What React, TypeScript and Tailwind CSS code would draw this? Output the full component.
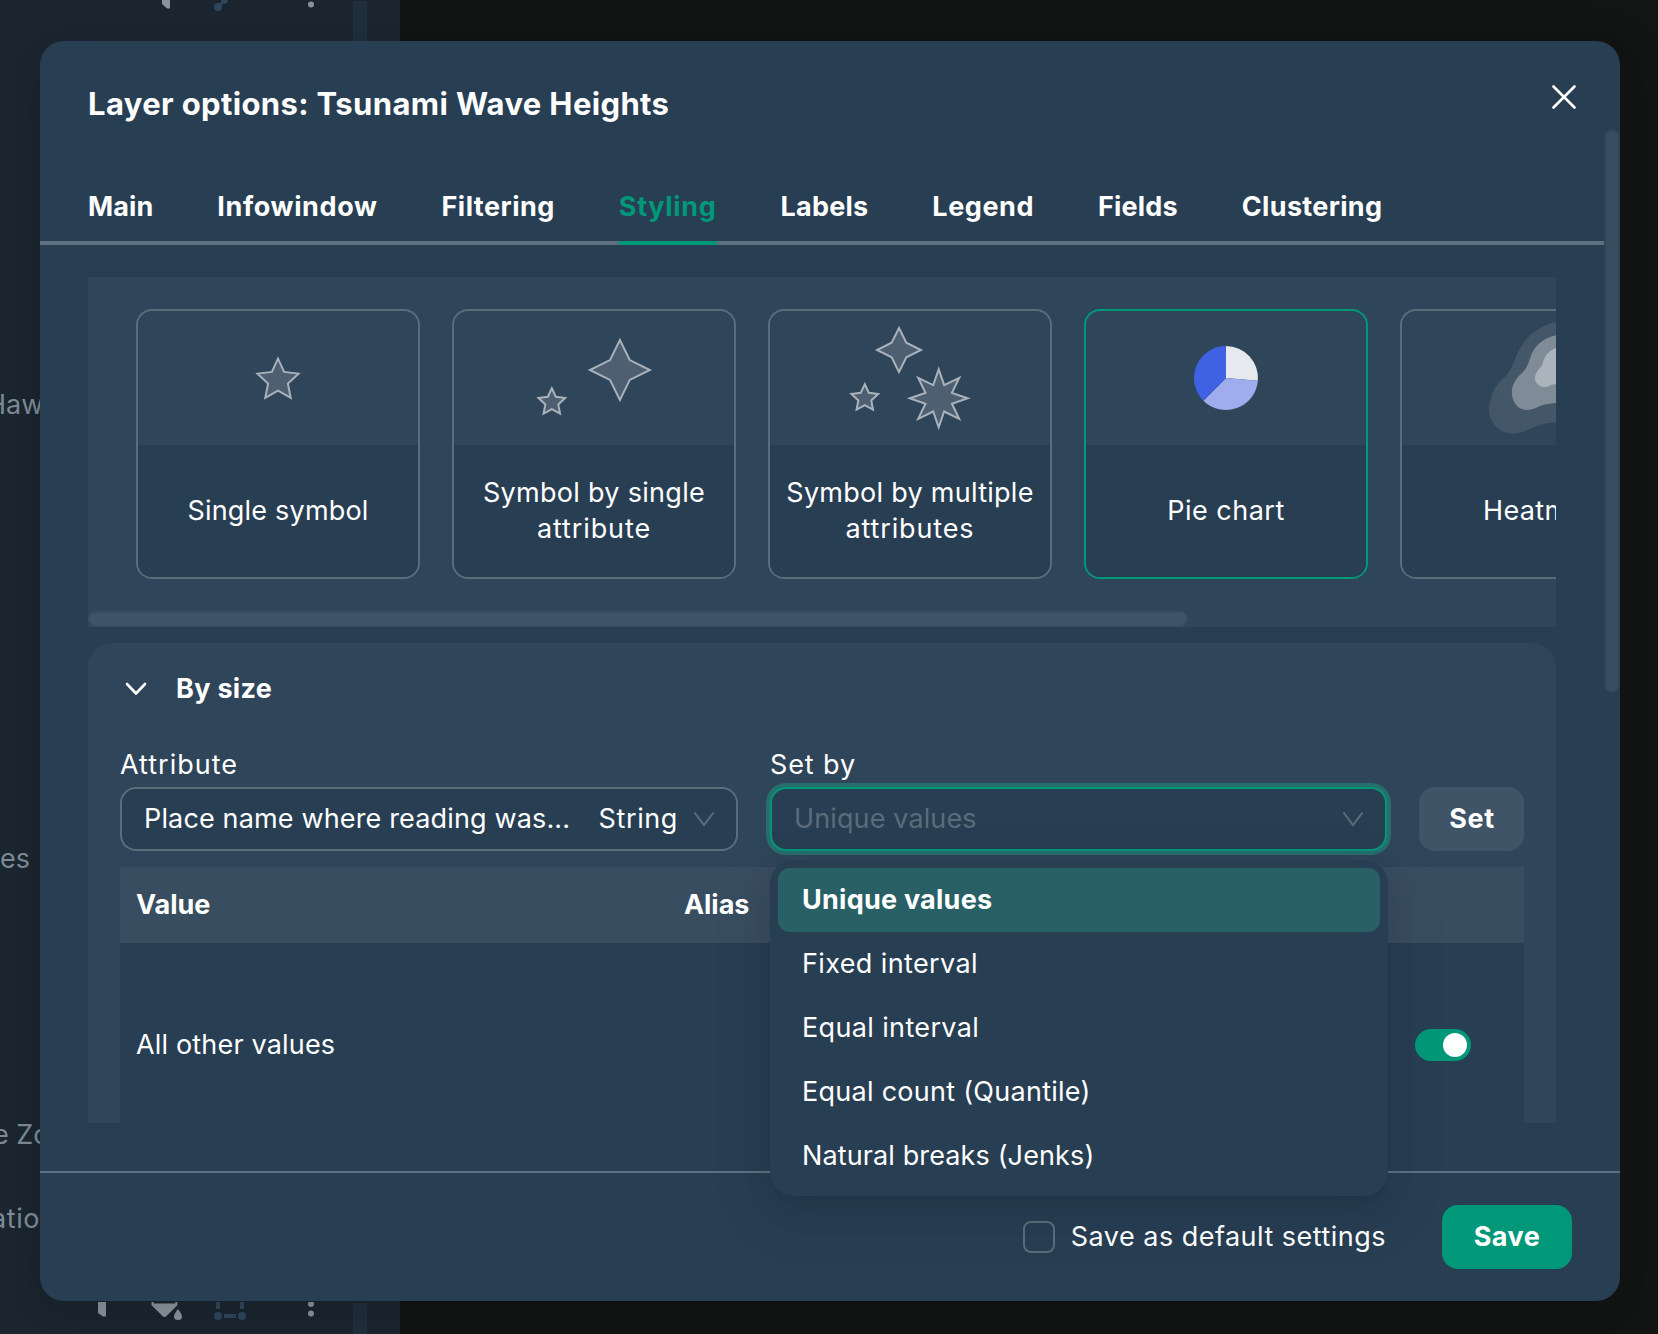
import type { ReactNode } from "react";

const TABS = [
  { label: "Main", cls: "tracking-[0.1px]" },
  { label: "Infowindow", cls: "tracking-[0.62px]" },
  { label: "Filtering", cls: "tracking-[0.48px]" },
  { label: "Styling", cls: "tracking-[0.68px]", active: true },
  { label: "Labels", cls: "tracking-[0.2px]" },
  { label: "Legend", cls: "tracking-[0.58px]" },
  { label: "Fields", cls: "tracking-[0.17px]" },
  { label: "Clustering", cls: "tracking-[0.32px]" },
];

const OPTIONS = [
  { label: "Unique values", cls: "bg-[#296065] font-bold tracking-[0.25px]" },
  { label: "Fixed interval", cls: "tracking-[0.38px]" },
  { label: "Equal interval", cls: "tracking-[0.36px]" },
  { label: "Equal count (Quantile)", cls: "tracking-[0.27px]" },
  { label: "Natural breaks (Jenks)", cls: "tracking-[0.12px]" },
];

function starPoints(n: number, cx: number, cy: number, outer: number, inner: number) {
  return Array.from({ length: n * 2 }, (_, i) => {
    const r = i % 2 ? inner : outer;
    const a = (Math.PI * i) / n - Math.PI / 2;
    return `${(cx + r * Math.cos(a)).toFixed(2)},${(cy + r * Math.sin(a)).toFixed(2)}`;
  }).join(" ");
}

function Star({ n, x, y, outer, inner }: { n: number; x: number; y: number; outer: number; inner: number }) {
  return (
    <polygon
      points={starPoints(n, x, y, outer, inner)}
      fill="#4d5f70"
      stroke="#a9b2bb"
      strokeWidth="2"
      strokeMiterlimit="10"
    />
  );
}

function TypeCard({ children, lines, active }: { children: ReactNode; lines: ReactNode; active?: boolean }) {
  return (
    <div
      className={`flex h-[270px] w-[284px] shrink-0 flex-col overflow-hidden rounded-2xl border-2 ${
        active ? "border-[#009878]" : "border-[#5b6c7b]"
      }`}
    >
      <svg className="block h-[134px] w-[280px] shrink-0" viewBox="0 0 280 134">
        {children}
      </svg>
      <div className="flex flex-1 flex-col items-center justify-center bg-[#283e53] text-center leading-9 whitespace-nowrap">
        {lines}
      </div>
    </div>
  );
}

function Caret() {
  return (
    <svg className="h-4 w-[22px]" viewBox="0 0 22 16" fill="none" stroke="#5b6c7b" strokeWidth="2">
      <path d="M1.5 1.5 11 14.2 20.5 1.5" />
    </svg>
  );
}

function Sidebar() {
  return (
    <aside className="flex h-full w-[400px] flex-col overflow-hidden bg-[#1b2630] leading-10 whitespace-nowrap text-[#7f8b97]">
      <div className="flex h-[41px]">
        <svg className="block h-[41px] w-[353px]" viewBox="0 0 353 41">
          <path d="M162 0h8v8.5h-3L162 4z" fill="#8a949e" />
          <path d="M218 7 225 0" stroke="#2f475d" strokeWidth="2.5" />
          <circle cx="218" cy="7" r="4" fill="#2f475d" />
          <circle cx="224.5" cy="0.5" r="3.2" fill="#2f475d" />
          <circle cx="311" cy="4.5" r="3" fill="#8a949e" />
        </svg>
        <div className="mt-px w-3.5 bg-[#212f3c]" />
      </div>
      <div className="mt-[344px] -ml-[14px]">Haw</div>
      <div className="mt-[414px]">es</div>
      <div className="mt-[236px] -ml-[7px]">e Zones</div>
      <div className="mt-[44px] -ml-[9px] tracking-[0.6px]">ation</div>
      <div className="mt-[63px] flex h-[33px]">
        <svg className="block h-[33px] w-[353px]" viewBox="0 0 353 33">
          <path d="M98 0h8v14.5h-3L98 11z" fill="#8a949e" />
          <path d="M151.5 0h2.2v1.5h21.5V0h2.2v3.2L166.5 14q-2 1.8-4 0L151.5 3.2z" fill="#8a949e" />
          <path d="M178 7c2 3 4 5.2 4 7.5a4 3.6 0 0 1-8 0c0-2.3 2-4.5 4-7.5z" fill="#8a949e" />
          <path d="M218 0v7M242 0v7M224 14h12" stroke="#2f475d" strokeWidth="4" fill="none" />
          <circle cx="218" cy="14" r="4" fill="#2f475d" />
          <circle cx="242" cy="14" r="4" fill="#2f475d" />
          <circle cx="311" cy="2" r="3" fill="#8a949e" />
          <circle cx="311" cy="11.5" r="3" fill="#8a949e" />
        </svg>
        <div className="mt-px w-3.5 bg-[#212f3c]" />
      </div>
    </aside>
  );
}

function SymbolTypes() {
  return (
    <div className="h-[350px] overflow-hidden bg-[#2f455a]">
      <div className="flex gap-8 px-12 pt-8">
        <TypeCard lines={<span className="tracking-[0.2px]">Single symbol</span>}>
          <Star n={5} x={140} y={69.3} outer={21.6} inner={10.4} />
        </TypeCard>
        <TypeCard
          lines={
            <>
              <span className="tracking-[0.3px]">Symbol by single</span>
              <span className="tracking-[0.9px]">attribute</span>
            </>
          }
        >
          <Star n={5} x={97.8} y={91.3} outer={14} inner={6.8} />
          <Star n={4} x={165.9} y={59} outer={30} inner={14} />
        </TypeCard>
        <TypeCard
          lines={
            <>
              <span className="tracking-[0.27px]">Symbol by multiple</span>
              <span className="tracking-[0.85px]">attributes</span>
            </>
          }
        >
          <Star n={4} x={129} y={39} outer={22} inner={10.4} />
          <Star n={5} x={94.8} y={87.3} outer={14} inner={6.8} />
          <Star n={8} x={168.7} y={87.3} outer={29} inner={14.3} />
        </TypeCard>
        <TypeCard active lines={<span className="tracking-[0.5px]">Pie chart</span>}>
          <path d="M140 67V35A32 32 0 0 1 171.88 69.79Z" fill="#e6eaee" />
          <path d="M140 67 171.88 69.79A32 32 0 0 1 117.37 89.63Z" fill="#9facee" />
          <path d="M140 67 117.37 89.63A32 32 0 0 1 140 35Z" fill="#3f62e2" />
        </TypeCard>
        <TypeCard lines={<span className="tracking-[0.35px]">Heatmap</span>}>
          <path
            d="M154 11C134 15 120 30 114.7 44C109 58 108 62 98 70.7C90 79 87 90 87 100C88 114 99 123 112 122.7C126 121 132 115 140 113.5C146 112 150 112 154 111.3L190 100V11Z"
            fill="#435769"
          />
          <path
            d="M154 24.3C139 27 131 38 128.5 46C125 58 122 60 116 66C108 76 109 84 112 90.7C116 98 121 99 126.3 99C132 98.5 136 95.5 141 94C146 92.5 150 92.5 154 92L180 84V24Z"
            fill="#7f8b97"
          />
          <path
            d="M154 37C146 40 142 46 140.5 53C138 58 133 61 133 67C133 73 138 76 143 76C147 75.5 149 73.5 154 73L170 66V37Z"
            fill="#abb4bc"
          />
        </TypeCard>
      </div>
      <div className="mt-8 h-4 w-[1100px] rounded-lg border-2 border-[#384d61] bg-[#3f5468]" />
    </div>
  );
}

function BySize() {
  return (
    <section className="mt-4 h-[480px] overflow-hidden rounded-t-3xl bg-[#2f455a] px-8">
      <div className="flex h-[90px] items-center pt-0.5">
        <svg className="ml-[5px] h-3.5 w-[22px]" viewBox="0 0 22 14" fill="none" stroke="#fff" strokeWidth="2.6" strokeLinecap="round" strokeLinejoin="round">
          <path d="M2 2 11 11.5 20 2" />
        </svg>
        <h2 className="ml-[29px] font-bold tracking-[0.3px]">By size</h2>
      </div>
      <div className="mt-2.5 flex items-end">
        <div className="w-[618px]">
          <div className="h-11 leading-[44px] tracking-[1px]">Attribute</div>
          <div className="flex h-16 items-center rounded-2xl border-2 border-[#5b6c7b] bg-[#283e53] pr-[21px] pl-[22px] whitespace-nowrap">
            <span className="tracking-[0.15px]">Place name where reading was...</span>
            <span className="ml-auto tracking-[0.6px]">String</span>
            <span className="ml-[15px]">
              <Caret />
            </span>
          </div>
        </div>
        <div className="ml-8 w-[617px]">
          <div className="h-11 leading-[44px] tracking-[0.9px]">Set by</div>
          <div className="flex h-16 items-center justify-between rounded-2xl border-2 border-[#009878] bg-[#283e53] pr-[21px] pl-[22px] text-[#5b6c7b] ring-4 ring-[#286e6e]">
            <span className="tracking-[0.12px]">Unique values</span>
            <Caret />
          </div>
        </div>
        <button className="ml-auto h-16 w-[105px] rounded-2xl bg-[#405468] pl-px font-bold tracking-[0.6px]">Set</button>
      </div>
      <div className="mt-4 flex h-[76px] items-center bg-[#394d61] pl-4 font-bold tracking-[-0.05px]">
        <div className="w-[548px]">Value</div>
        <div>Alias</div>
      </div>
      <div className="flex h-[204px] items-center bg-[#283e53] pr-[53px] pl-4">
        <span className="tracking-[0.17px]">All other values</span>
        <div className="ml-auto flex h-8 w-14 justify-end rounded-full bg-[#009878] p-1">
          <div className="size-6 rounded-full bg-white" />
        </div>
      </div>
    </section>
  );
}

export default function App() {
  return (
    <div className="relative h-[1334px] w-[1658px] overflow-hidden bg-[#121513] font-['Inter','Liberation_Sans',sans-serif] text-[27px] leading-9 text-white">
      <Sidebar />
      <div className="absolute top-[41px] left-10 flex h-[1260px] w-[1580px] flex-col rounded-3xl bg-[#283e53] shadow-[0_12px_32px_rgba(0,0,0,0.08),0_18px_56px_16px_rgba(0,0,0,0.05)]">
        <header className="flex h-[124px] items-start justify-between pt-[43px] pr-11 pl-12">
          <h1 className="text-[31px] leading-10 font-bold tracking-[0.36px]">Layer options: Tsunami Wave Heights</h1>
          <svg className="mt-px h-6 w-6" viewBox="0 0 24 24" stroke="#fff" strokeWidth="2.6" strokeLinecap="round">
            <path d="M1.5 1.5l21 21M22.5 1.5l-21 21" />
          </svg>
        </header>
        <nav className="mr-4 flex h-20 gap-16 border-b-4 border-[#5f7080] pl-12 font-bold">
          {TABS.map((t) => (
            <div
              key={t.label}
              className={`h-20 pt-6 ${t.cls} ${t.active ? "border-b-4 border-[#009878] text-[#009878]" : ""}`}
            >
              {t.label}
            </div>
          ))}
        </nav>
        <main className="mt-8 h-[846px] overflow-hidden pr-16 pl-12">
          <SymbolTypes />
          <BySize />
        </main>
        <footer className="mt-12 flex flex-1 items-center justify-end border-t-2 border-[#5f7080] pr-12">
          <div className="size-8 rounded-lg border-2 border-[#5b6c7b]" />
          <span className="ml-4 tracking-[0.48px]">Save as default settings</span>
          <button className="ml-14 h-16 w-[130px] rounded-2xl bg-[#009878] font-bold tracking-[0.5px]">Save</button>
        </footer>
        <div className="absolute top-[88px] right-0 h-[564px] w-4 rounded-lg border-2 border-[#30465a] bg-[#394d61]" />
        <ul className="absolute top-[819px] left-[730px] h-[336px] w-[618px] rounded-3xl bg-[#283e53] p-2 shadow-[0_12px_32px_rgba(0,0,0,0.08),0_6px_12px_-8px_rgba(0,0,0,0.12),0_18px_56px_16px_rgba(0,0,0,0.05)]">
          {OPTIONS.map((o) => (
            <li key={o.label} className={`flex h-16 items-center rounded-xl pl-6 ${o.cls}`}>
              {o.label}
            </li>
          ))}
        </ul>
      </div>
    </div>
  );
}
